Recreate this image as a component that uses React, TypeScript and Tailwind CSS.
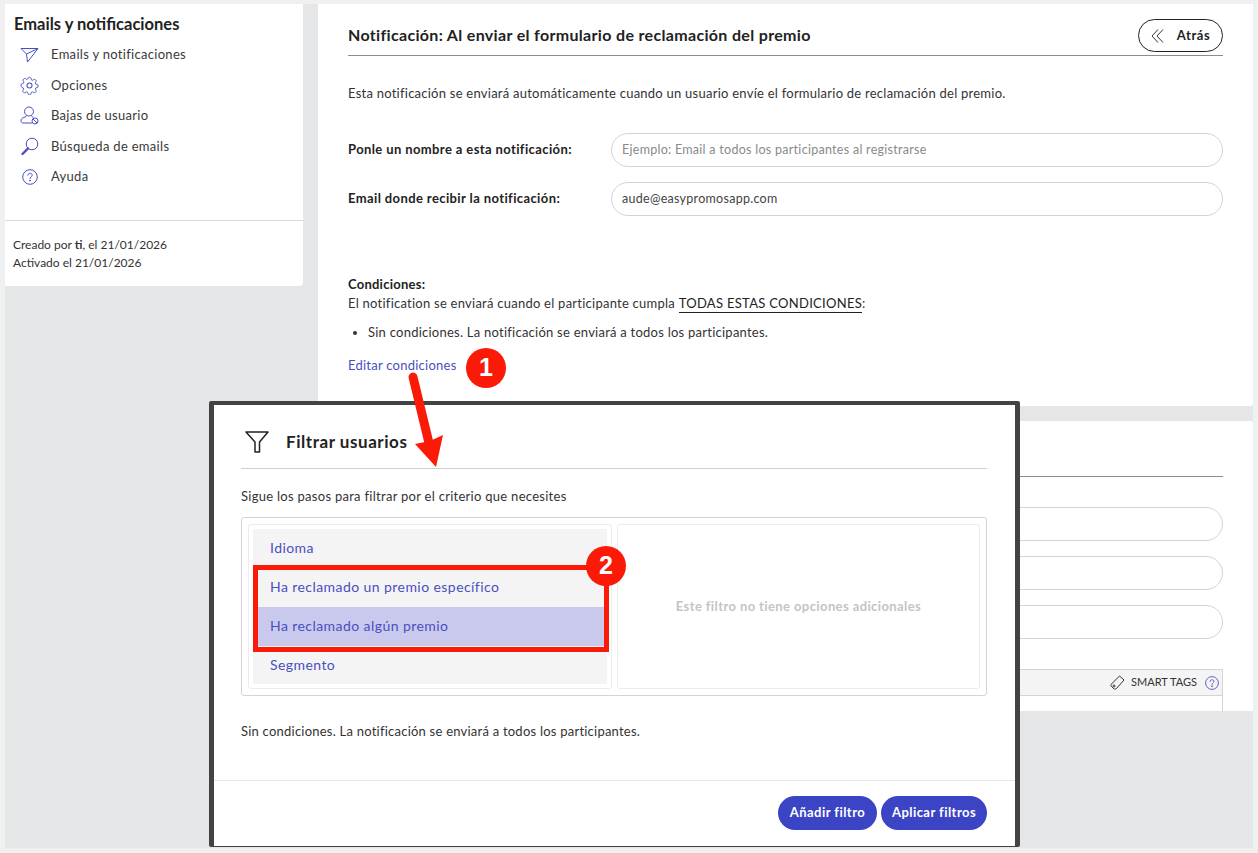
import React from "react";

const font = { fontFamily: '"Lato", "Noto Sans", sans-serif' };

function Send() {
  return (
    <svg width="19" height="16" viewBox="0 0 19 16" fill="none" stroke="#4a4fc0" strokeWidth="1" strokeLinejoin="round">
      <path d="M1 1.5 L18 1.5 L7.5 15 L6.5 7 Z M6.5 7 L18 1.5" />
    </svg>
  );
}
function Gear() {
  return (
    <svg width="19" height="19" viewBox="0 0 24 24" fill="none" stroke="#4a4fc0" strokeWidth="1.3" strokeLinejoin="round">
      <circle cx="12" cy="12" r="3.2" />
      <path d="M12 1c1.4 0 2.1.8 2.3 2.1l.2 1.3 2 .8 1.1-.8c1-.7 2.1-.6 3 .3.9.9 1 2 .3 3l-.8 1.1.8 2 1.3.2c1.3.2 2.1.9 2.1 2.3 0 1.4-.8 2.1-2.1 2.3l-1.3.2-.8 2 .8 1.1c.7 1 .6 2.1-.3 3-.9.9-2 1-3 .3l-1.1-.8-2 .8-.2 1.3c-.2 1.3-.9 2.1-2.3 2.1-1.4 0-2.1-.8-2.3-2.1l-.2-1.3-2-.8-1.1.8c-1 .7-2.1.6-3-.3-.9-.9-1-2-.3-3l.8-1.1-.8-2-1.3-.2C.8 14.1 0 13.4 0 12c0-1.4.8-2.1 2.1-2.3l1.3-.2.8-2-.8-1.1c-.7-1-.6-2.1.3-3 .9-.9 2-1 3-.3l1.1.8 2-.8.2-1.3C10.1 1.8 10.6 1 12 1z" transform="translate(12 12) scale(.9) translate(-12 -12.5)" />
    </svg>
  );
}
function UserBan() {
  return (
    <svg width="19" height="19" viewBox="0 0 19 19" fill="none" stroke="#4a4fc0" strokeWidth="1">
      <circle cx="9" cy="5.5" r="4.5" />
      <path d="M6.5 9.5 C6.5 11 4 11.2 2.5 12 C0.5 13 0.5 17 3 17 L12 17 M11.5 9.5 C11.5 10.5 12.5 11 13.5 11.3" />
      <circle cx="15" cy="15" r="3" fill="#fff" />
      <path d="M13 13 L17 17" />
    </svg>
  );
}
function Search() {
  return (
    <svg width="18" height="19" viewBox="0 0 18 19" fill="none" stroke="#4a4fc0">
      <circle cx="11" cy="7" r="5.8" strokeWidth="1" />
      <path d="M7 11.5 L1.5 17" strokeWidth="2.4" strokeLinecap="round" />
    </svg>
  );
}
function Help({ size = 16 }: { size?: number }) {
  return (
    <svg width={size} height={size} viewBox="0 0 16 16" fill="none" stroke="#4a4fc0" strokeWidth="1">
      <circle cx="8" cy="8" r="7.3" />
      <path d="M5.8 6.2 C5.8 3.6 10.2 3.6 10.2 6.2 C10.2 7.8 8 7.8 8 9.6" strokeLinecap="round" />
      <circle cx="8" cy="11.6" r=".5" fill="#4a4fc0" />
    </svg>
  );
}
function Chevrons() {
  return (
    <svg width="13" height="14" viewBox="0 0 13 14" fill="none" stroke="#333" strokeWidth="1">
      <path d="M7 .5 L1 7 L7 13.5 M12 .5 L6 7 L12 13.5" />
    </svg>
  );
}
function Tag() {
  return (
    <svg width="15" height="15" viewBox="0 0 15 15" fill="none" stroke="#333" strokeWidth="1" strokeLinejoin="round">
      <path d="M9.5 1 L14 5 L6.5 13.5 C5.5 14.3 4.5 14.3 3.5 13.5 L1.5 11.5 C.8 10.7 .8 10 1.5 9 Z" />
      <circle cx="4" cy="11" r="1" />
    </svg>
  );
}
function Funnel() {
  return (
    <svg width="24" height="22" viewBox="0 0 24 22" fill="none" stroke="#222" strokeWidth="1.5" strokeLinejoin="round">
      <path d="M1 1 L23 1 L14.5 11 L14.5 21 L10 21 L10 11 Z" />
    </svg>
  );
}

const nav: [string, React.ReactNode][] = [
  ["Emails y notificaciones", <Send />],
  ["Opciones", <Gear />],
  ["Bajas de usuario", <UserBan />],
  ["Búsqueda de emails", <Search />],
  ["Ayuda", <Help />],
];

function Sidebar() {
  return (
    <aside className="w-[298px] h-[282px] shrink-0 bg-white rounded-br-[3px] flex flex-col">
      <h2 className="pl-[9px] pt-[10px] text-[16.5px] leading-[20px] font-bold text-[#222]">Emails y notificaciones</h2>
      <ul className="mt-[5.5px] flex flex-col pl-[15px]">
        {nav.map(([label, icon]) => (
          <li key={label} className="h-[30.5px] flex items-center text-[13px] tracking-[0.3px] text-[#3a3a3a]">
            <span className="w-[19px] flex justify-center">{icon}</span>
            <span className="ml-[12px]">{label}</span>
          </li>
        ))}
      </ul>
      <div className="mt-[27.5px] border-t border-[#d9d9d9] pt-[15px] pl-[8px] text-[12px] leading-[18px] text-[#333]">
        <p>Creado por <b>ti</b>, el 21/01/2026</p>
        <p>Activado el 21/01/2026</p>
      </div>
    </aside>
  );
}

function Input({ value, placeholder }: { value?: string; placeholder?: string }) {
  return (
    <div className="h-[34px] rounded-full border border-[#d4d4d4] bg-white flex items-center pl-[10px] text-[12.5px] tracking-[0.28px]">
      {value ? <span className="text-[#444]">{value}</span> : <span className="text-[#8a8a8a]">{placeholder}</span>}
    </div>
  );
}

function MainCards() {
  return (
    <div className="flex-1 flex flex-col gap-[15px] min-w-0">
      <section className="h-[402px] bg-white rounded-br-[3px] px-[30px] pt-[15px] text-[13px] tracking-[0.245px] text-[#333]">
        <header className="h-[37px] border-b border-[#8c8c8c] flex items-start justify-between">
          <h1 className="pt-[6px] text-[16px] leading-[20px] tracking-[0.33px] font-bold text-[#222]">
            Notificación: Al enviar el formulario de reclamación del premio
          </h1>
          <button className="w-[85px] h-[33px] rounded-full border border-[#222] flex items-center justify-center gap-[13px] font-bold text-[13px] tracking-[0.6px] text-[#222]">
            <Chevrons />
            Atrás
          </button>
        </header>
        <p className="mt-[28px] leading-[18px]">
          Esta notificación se enviará automáticamente cuando un usuario envíe el formulario de reclamación del premio.
        </p>
        <div className="mt-[31px] flex flex-col gap-[15px]">
          <div className="grid grid-cols-[263px_1fr] items-center">
            <label className="font-bold tracking-[0.39px] text-[#222]">Ponle un nombre a esta notificación:</label>
            <Input placeholder="Ejemplo: Email a todos los participantes al registrarse" />
          </div>
          <div className="grid grid-cols-[263px_1fr] items-center">
            <label className="font-bold tracking-[0.39px] text-[#222]">Email donde recibir la notificación:</label>
            <Input value="aude@easypromosapp.com" />
          </div>
        </div>
        <div className="mt-[59px] leading-[19px]">
          <p className="font-bold text-[#222]">Condiciones:</p>
          <p>
            El notification se enviará cuando el participante cumpla{" "}
            <span className="border-b border-[#222] pb-[1px] text-[#222] tracking-[0.3px]">TODAS ESTAS CONDICIONES</span>:
          </p>
          <ul className="mt-[10px] ml-[20px] list-disc">
            <li>Sin condiciones. La notificación se enviará a todos los participantes.</li>
          </ul>
          <a className="block mt-[14px] text-[#4a4fc0]">Editar condiciones</a>
        </div>
      </section>
      <section className="h-[290px] bg-white rounded-tr-[3px] px-[30px] text-[13px] flex flex-col">
        <div className="mt-[55px] border-b border-[#8c8c8c]" />
        <div className="mt-[30px] flex flex-col gap-[15px] pl-[293px]">
          <Input />
          <Input />
          <Input />
        </div>
        <div className="mt-[30px] flex-1 border-x border-[#d4d4d4]">
          <div className="h-[27px] bg-[#f4f4f4] border-y border-[#d4d4d4] flex items-center justify-end gap-[6px] pr-[3px] text-[11px] text-[#333]">
            <Tag />
            <span>SMART TAGS</span>
            <span className="ml-[2px] flex"><Help size={14} /></span>
          </div>
        </div>
      </section>
    </div>
  );
}

const filters = ["Idioma", "Ha reclamado un premio específico", "Ha reclamado algún premio", "Segmento"];

function Modal() {
  return (
    <div className="absolute left-[209px] top-[401px] w-[811px] h-[446px] border-x-[5px] border-t-[4px] border-b-[1px] border-[#414345] bg-white rounded-[2px] flex flex-col">
      <div className="pl-[27px] pr-[28px] flex-1">
        <div className="h-[64px] border-b border-[#cfcfcf] flex items-center pl-[4px] pt-[12px] pb-[1px]">
          <Funnel />
          <h3 className="ml-[17px] text-[17px] tracking-[0.55px] font-bold text-[#222]">Filtrar usuarios</h3>
        </div>
        <p className="mt-[18px] leading-[18px] text-[13px] tracking-[0.28px] text-[#333]">Sigue los pasos para filtrar por el criterio que necesites</p>
        <div className="mt-[12px] h-[179px] border border-[#d4d4d4] rounded-[3px] p-[6px] flex gap-[5px]">
          <div className="w-[364px] border border-[#ececec] rounded-[3px] p-[4px]">
            <ul className="bg-[#f4f4f4] h-full text-[14px] tracking-[0.43px] text-[#4a4fc0]">
              {filters.map((f, i) => (
                <li key={f} className={i === 2 ? "h-[39px] flex items-center pl-[17px] pb-[2px] bg-[#c9c9ee]" : "h-[39px] flex items-center pl-[17px] pb-[2px]"}>{f}</li>
              ))}
            </ul>
          </div>
          <div className="flex-1 border border-[#ececec] rounded-[3px] flex items-center justify-center text-[13px] tracking-[0.4px] font-bold text-[#c4c4c4]">
            Este filtro no tiene opciones adicionales
          </div>
        </div>
        <p className="mt-[26px] leading-[18px] text-[13px] tracking-[0.23px] text-[#333]">Sin condiciones. La notificación se enviará a todos los participantes.</p>
      </div>
      <div className="h-[66px] border-t border-[#e8e8e8] flex items-start justify-end gap-[4px] pt-[15px] pr-[28px]">
        <button className="w-[99px] h-[34px] rounded-full bg-[#3a44c4] text-white text-[13px] tracking-[0.45px] font-bold">Añadir filtro</button>
        <button className="w-[106px] h-[34px] rounded-full bg-[#3a44c4] text-white text-[13px] tracking-[0.45px] font-bold">Aplicar filtros</button>
      </div>
    </div>
  );
}

function Badge({ n, className }: { n: string; className: string }) {
  return (
    <div className={"absolute w-[40px] h-[40px] rounded-full bg-[#fb1a08] text-white font-bold text-[25px] flex items-center justify-center " + className} style={{ fontFamily: '"Liberation Sans", sans-serif' }}>
      {n}
    </div>
  );
}

function Annotations() {
  return (
    <>
      <Badge n="1" className="left-[466px] top-[348px]" />
      <svg className="absolute left-[400px] top-[365px]" width="60" height="110" viewBox="0 0 60 110" fill="none">
        <path d="M13 12 L29 78" stroke="#fb1a08" strokeWidth="9" strokeLinecap="round" />
        <path d="M36 102 L43 70 L30 76 L15 79 Z" fill="#fb1a08" />
      </svg>
      <div className="absolute left-[253px] top-[565px] w-[356px] h-[87px] border-[5px] border-[#fb1a08]" />
      <Badge n="2" className="left-[586px] top-[546px]" />
    </>
  );
}

export default function App() {
  return (
    <div className="relative w-[1258px] h-[853px] overflow-hidden bg-[#f0f0f0] pt-[4px] px-[5px] pb-[5px]" style={font}>
      <div className="h-full bg-[#e5e6e8] flex gap-[15px] items-start">
        <Sidebar />
        <MainCards />
      </div>
      <Modal />
      <Annotations />
    </div>
  );
}
